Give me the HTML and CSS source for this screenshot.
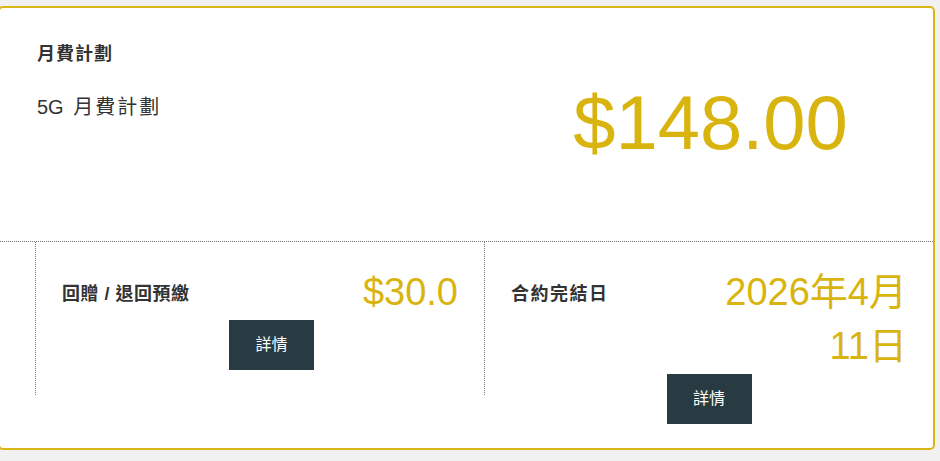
FILE: index.html
```html
<!DOCTYPE html>
<html lang="zh-Hant">
<head>
<meta charset="utf-8">
<title>月費計劃</title>
<link rel="stylesheet" href="styles.css">
</head>
<body>
<div class="page">
  <section class="card">
    <div class="plan">
      <div class="plan-info">
        <div class="plan-label">月費計劃</div>
        <div class="plan-name">5G <span class="plan-name-cjk">月費計劃</span></div>
      </div>
      <div class="plan-price">$148.00</div>
    </div>
    <div class="details">
      <div class="detail">
        <div class="detail-row">
          <div class="detail-label">回贈 / 退回預繳</div>
          <div class="detail-value">$30.0</div>
        </div>
        <div class="detail-actions detail-actions--first">
          <button class="btn">詳情</button>
        </div>
      </div>
      <div class="detail">
        <div class="detail-row">
          <div class="detail-label detail-label--wide">合約完結日</div>
          <div class="detail-value">2026年4月11日</div>
        </div>
        <div class="detail-actions detail-actions--second">
          <button class="btn">詳情</button>
        </div>
      </div>
    </div>
  </section>
</div>
</body>
</html>
```
FILE: styles.css
```css
html, body {
  margin: 0;
  padding: 0;
  background: #f1f1f1;
}

body {
  font-family: "Liberation Sans", Arial, "Noto Sans CJK TC", sans-serif;
  color: #333;
}

.page {
  padding: 6px 5px 0 0;
}

.card {
  margin-left: -2px;
  border: 2px solid #dbb514;
  border-radius: 5px;
  background: #fff;
  padding-bottom: 53px;
}

.plan {
  display: grid;
  grid-template-columns: 35px 1fr 1fr;
  padding: 33px 0 64px;
}

.plan-info {
  grid-column: 2;
  padding-left: 2px;
}

.plan-label {
  font-size: 18px;
  line-height: 26px;
  font-weight: bold;
  letter-spacing: 1px;
}

.plan-name {
  margin-top: 26px;
  font-size: 20px;
  line-height: 28px;
  word-spacing: 4px;
}

.plan-name-cjk {
  letter-spacing: 2px;
}

.plan-price {
  grid-column: 3;
  margin-top: 28px;
  padding-left: 4px;
  font-size: 76px;
  line-height: 108px;
  color: #dab40e;
  text-align: center;
}

.details {
  display: grid;
  grid-template-columns: 35px 1fr 1fr;
  border-top: 1px dotted #777;
}

.detail {
  height: 153px;
  box-sizing: border-box;
  border-left: 1px dotted #777;
  padding: 23px 26px 0;
}

.detail:first-child {
  grid-column: 2;
}

.detail-row {
  display: flex;
  justify-content: space-between;
  align-items: flex-start;
}

.detail-label {
  padding-top: 16px;
  font-size: 18px;
  line-height: 26px;
  font-weight: bold;
  letter-spacing: 0.5px;
  white-space: nowrap;
}

.detail-label--wide {
  letter-spacing: 1.5px;
}

.detail-value {
  max-width: 50%;
  font-size: 38px;
  line-height: 54px;
  color: #dab40e;
  text-align: right;
}

.detail-actions {
  display: flex;
  justify-content: center;
  margin-top: 1px;
}

.detail-actions--first {
  padding-left: 23px;
}

.detail-actions--second {
  padding-left: 0;
}

.btn {
  width: 85px;
  height: 50px;
  border: 0;
  border-radius: 0;
  background: #293b42;
  color: #fff;
  font-family: "Liberation Sans", Arial, "Noto Sans CJK TC", sans-serif;
  font-size: 16px;
  line-height: 24px;
  padding: 0;
  cursor: pointer;
}
```
